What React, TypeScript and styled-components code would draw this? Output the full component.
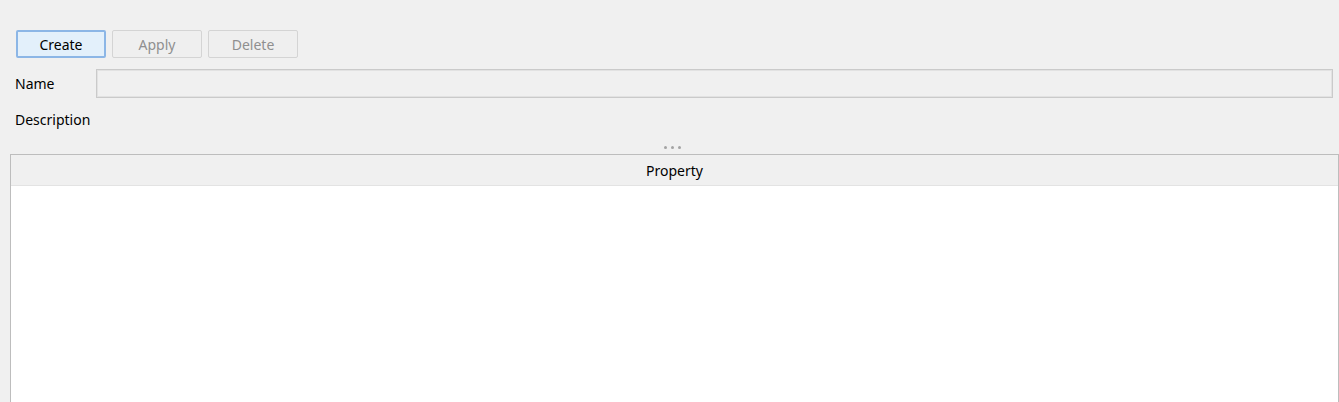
import React from 'react';
import styled, { createGlobalStyle } from 'styled-components';

const GlobalStyle = createGlobalStyle`
    html, body {
        margin: 0;
        padding: 0;
        background: #f0f0f0;
        font-family: "Noto Sans", "Open Sans", sans-serif;
        font-size: 14px;
        color: #000;
    }
`;

const Styled = {
    Page: styled.div`
        width: 1339px;
        height: 402px;
        overflow: hidden;
        display: flex;
        flex-direction: column;
        padding-top: 30px;
        box-sizing: border-box;
    `,
    Toolbar: styled.div`
        display: flex;
        gap: 6px;
        padding-left: 16px;
    `,
    Button: styled.button<{ $primary?: boolean }>`
        width: 90px;
        height: 28px;
        box-sizing: border-box;
        padding: 0;
        font-family: inherit;
        font-size: 14px;
        border-radius: 2px;
        border: ${p => (p.$primary ? '2px solid #8cb6e6' : '1px solid #d4d4d4')};
        background: ${p => (p.$primary ? '#e3f0fb' : '#efefef')};
        color: ${p => (p.$primary ? '#000' : '#8f8f8f')};
        &:focus {
            outline: none;
        }
    `,
    Form: styled.div`
        display: grid;
        grid-template-columns: 81px 1fr;
        row-gap: 12px;
        padding: 11px 6px 0 15px;
        align-items: center;
    `,
    Label: styled.div<{ $compact?: boolean }>`
        line-height: ${p => (p.$compact ? '18px' : '28px')};
        margin-top: ${p => (p.$compact ? '1px' : '0')};
    `,
    Input: styled.div`
        height: 29px;
        box-sizing: border-box;
        border: 1px solid #cacaca;
        box-shadow: inset 0 0 0 1px #e2e2e2;
        background: #f0f0f0;
    `,
    Splitter: styled.div`
        display: flex;
        justify-content: center;
        gap: 4px;
        padding: 17px 0 5px;
        margin-left: 5px;
    `,
    Dot: styled.span`
        width: 3px;
        height: 3px;
        border-radius: 50%;
        background: #a3a3a3;
    `,
    Table: styled.div`
        margin-left: 10px;
        width: 1329px;
        flex: 1;
        box-sizing: border-box;
        border: 1px solid #bdbdbd;
        border-bottom: none;
        background: #fff;
        display: flex;
        flex-direction: column;
    `,
    HeaderCell: styled.div`
        height: 31px;
        box-sizing: border-box;
        background: #f0f0f0;
        border-bottom: 1px solid #e3e3e3;
        display: flex;
        align-items: center;
        justify-content: center;
    `,
};

const App: React.FC = () => {
    return (
        <>
            <GlobalStyle />
            <Styled.Page>
                <Styled.Toolbar>
                    <Styled.Button $primary>Create</Styled.Button>
                    <Styled.Button>Apply</Styled.Button>
                    <Styled.Button>Delete</Styled.Button>
                </Styled.Toolbar>
                <Styled.Form>
                    <Styled.Label>Name</Styled.Label>
                    <Styled.Input />
                    <Styled.Label $compact>Description</Styled.Label>
                    <div />
                </Styled.Form>
                <Styled.Splitter>
                    <Styled.Dot />
                    <Styled.Dot />
                    <Styled.Dot />
                </Styled.Splitter>
                <Styled.Table>
                    <Styled.HeaderCell>Property</Styled.HeaderCell>
                </Styled.Table>
            </Styled.Page>
        </>
    );
};

export default App;
